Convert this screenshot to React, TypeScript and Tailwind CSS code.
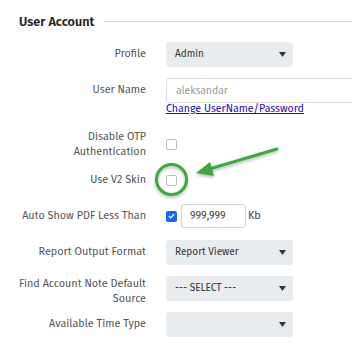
import React from 'react';

const font = "font-['Fira_Sans','Roboto','Liberation_Sans',sans-serif]";

function Caret() {
  return (
    <svg width="7" height="5" viewBox="0 0 7 5" className="shrink-0">
      <path d="M0 0h7L3.5 5z" fill="#333" />
    </svg>
  );
}

function Select({ value }: { value?: string }) {
  return (
    <div className="flex h-[25px] w-[127px] items-center justify-between rounded-[3px] bg-[#e9ecef] pl-[9px] pr-[7px] text-[10px] text-[#333]">
      <span>{value}</span>
      <Caret />
    </div>
  );
}

function Box({ checked }: { checked?: boolean }) {
  if (checked) {
    return (
      <span className="flex h-[11px] w-[11px] shrink-0 items-center justify-center rounded-[2px] bg-[#1669f2]">
        <svg width="7" height="6" viewBox="0 0 7 6">
          <path d="M0.8 3.1l1.8 1.7L6.2 1" fill="none" stroke="#fff" strokeWidth="1.2" />
        </svg>
      </span>
    );
  }
  return <span className="block h-[11px] w-[11px] shrink-0 rounded-[2px] border border-[#bdbdbd] bg-white" />;
}

function Row({
  label,
  className = '',
  labelClass = '',
  top = false,
  children,
}: {
  label: React.ReactNode;
  className?: string;
  labelClass?: string;
  top?: boolean;
  children: React.ReactNode;
}) {
  return (
    <div className={`grid grid-cols-[146px_1fr] gap-x-[20px] ${top ? 'items-start' : 'items-center'} ${className}`}>
      <div className={`text-right text-[10.8px] leading-[14.5px] text-[#555] ${labelClass}`}>{label}</div>
      <div>{children}</div>
    </div>
  );
}

export default function App() {
  return (
    <div className={`relative h-[346px] w-[352px] overflow-hidden bg-white ${font}`}>
      <div className="flex items-center pl-[19px] pt-[13px]">
        <h2 className="text-[12.7px] font-semibold leading-[17px] text-[#222]">User Account</h2>
        <div className="ml-[10px] h-px flex-1 bg-[#c9ddf4]" />
      </div>

      <Row label="Profile" className="mt-[12px]">
        <Select value="Admin" />
      </Row>

      <Row label="User Name" className="mt-[11px]" labelClass="pt-[5px]" top>
        <div className="flex h-[25px] w-[200px] items-center rounded-[3px] border border-[#dedede] pl-[9px] text-[10.4px] text-[#9a9a9a]">
          aleksandar
        </div>
        <a href="#" className="block text-[10.6px] leading-[12px] text-[#1a0dab] underline">
          Change UserName/Password
        </a>
      </Row>

      <Row
        label={
          <>
            Disable OTP
            <br />
            Authentication
          </>
        }
        className="mt-[15px]"
      >
        <Box />
      </Row>

      <Row label="Use V2 Skin" className="mt-[9px] h-[24px]">
        <Box />
      </Row>

      <Row label="Auto Show PDF Less Than" className="mt-[12px] h-[24px]">
        <div className="flex items-center">
          <Box checked />
          <div className="ml-[4px] flex h-[24px] w-[65px] items-center rounded-[3px] border border-[#d4d4d4] pl-[8px] text-[10.6px] text-[#444]">
            999,999
          </div>
          <span className="ml-[2px] text-[10.8px] text-[#444]">Kb</span>
        </div>
      </Row>

      <Row label="Report Output Format" className="mt-[12px]">
        <Select value="Report Viewer" />
      </Row>

      <Row
        label={
          <>
            Find Account Note Default
            <br />
            Source
          </>
        }
        className="mt-[11px]"
        labelClass="pt-[1px]"
        top
      >
        <Select value="--- SELECT ---" />
      </Row>

      <Row label="Available Time Type" className="mt-[6px]">
        <Select />
      </Row>

      {/* annotation overlay */}
      <svg className="pointer-events-none absolute left-0 top-0" width="352" height="346">
        <defs>
          <filter id="sh" x="-20%" y="-20%" width="140%" height="160%">
            <feDropShadow dx="0" dy="2" stdDeviation="1.5" floodColor="#000" floodOpacity="0.25" />
          </filter>
        </defs>
        <g filter="url(#sh)" fill="none" stroke="#3fa63f" strokeWidth="3">
          <circle cx="171.5" cy="179.5" r="15" />
          <line x1="277" y1="149" x2="206" y2="170" strokeLinecap="round" />
        </g>
        <path d="M196 173 L210 162 L214 176 Z" fill="#3fa63f" filter="url(#sh)" />
      </svg>
    </div>
  );
}
